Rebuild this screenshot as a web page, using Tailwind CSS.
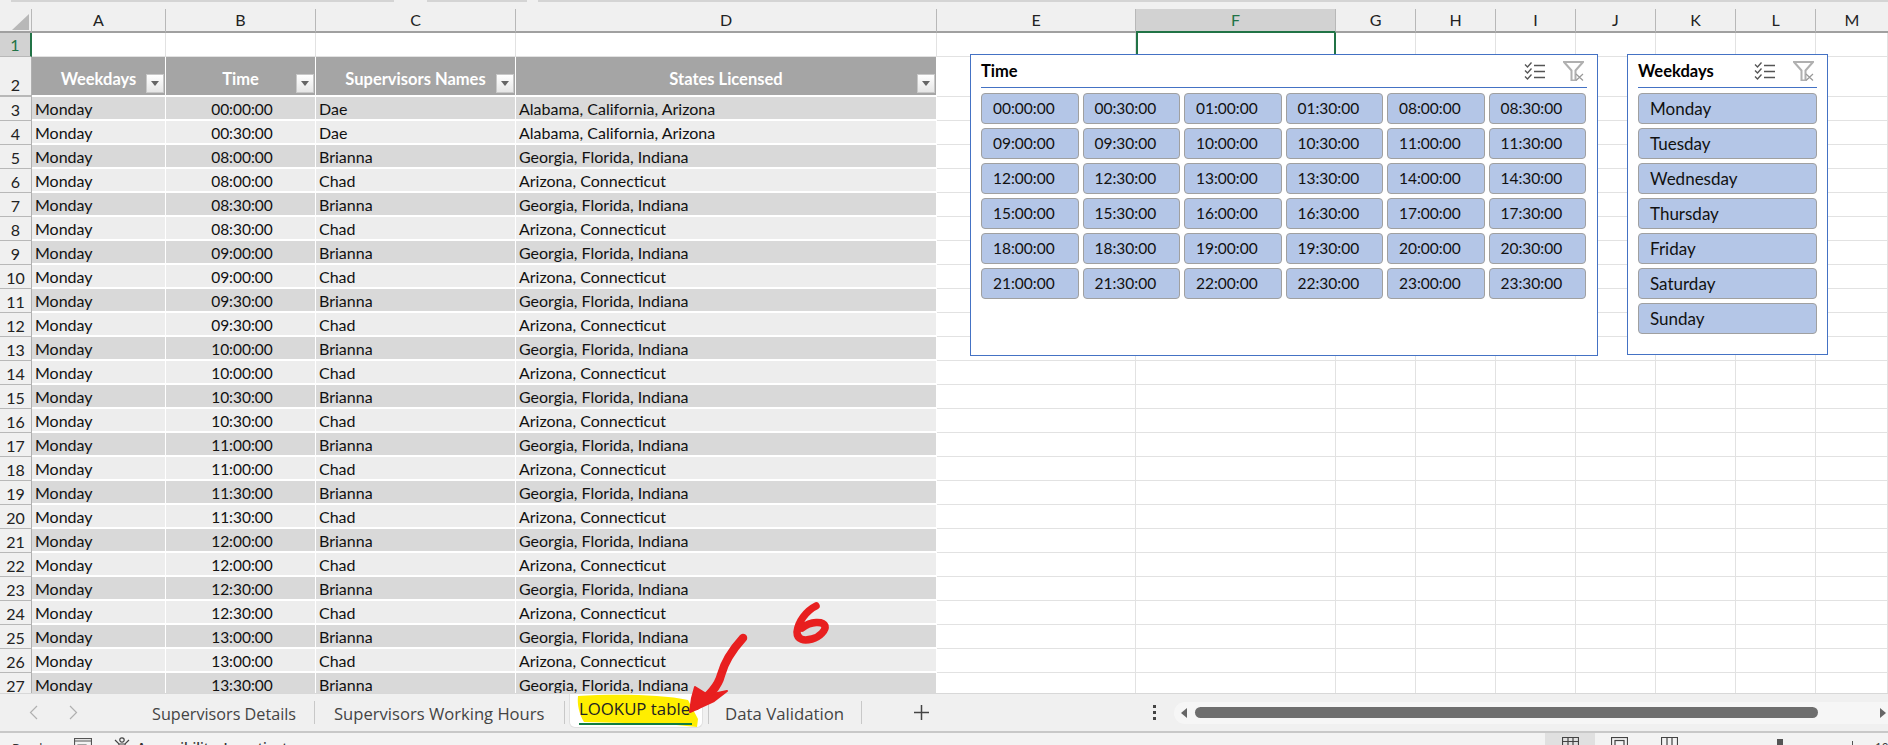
<!DOCTYPE html>
<html lang="en">
<head>
    <meta charset="UTF-8">
    <title>LOOKUP table</title>
    <script src="https://cdn.jsdelivr.net/npm/@tailwindcss/browser@4"></script>
</head>
<body class="bg-white font-['Lato','Liberation_Sans',sans-serif] text-[#111] overflow-hidden">
<div class="relative w-[1888px] h-[745px] flex flex-col overflow-hidden">

    <!-- ribbon edge -->
    <div class="h-[9px] shrink-0 bg-[#f0f0f0]">
        <div class="flex h-[2px]">
            <div class="w-[11px]"></div>
            <div class="w-[383px] bg-[#d4d4d4]"></div>
            <div class="w-[33px]"></div>
            <div class="w-[100px] bg-[#d4d4d4]"></div>
            <div class="w-[11px]"></div>
            <div class="flex-1 bg-[#d4d4d4]"></div>
        </div>
    </div>

    <!-- sheet -->
    <div class="relative flex-1 overflow-hidden">
        <table class="table-fixed border-separate border-spacing-0 w-[1888px] text-[16px] leading-[20px]">
            <colgroup>
                <col class="w-[32px]"><col class="w-[134px]"><col class="w-[150px]"><col class="w-[200px]"><col class="w-[421px]"><col class="w-[199px]"><col class="w-[200px]"><col class="w-[80px]"><col class="w-[80px]"><col class="w-[80px]"><col class="w-[80px]"><col class="w-[80px]"><col class="w-[80px]"><col class="w-[72px]">
            </colgroup>
            <thead class="[&_tr:first-child_th]:font-normal [&_tr:first-child_th]:bg-[#f0f0f0] [&_tr:first-child_th]:border-r [&_tr:first-child_th]:border-b-2 [&_tr:first-child_th]:border-r-[#b8b8b8] [&_tr:first-child_th]:border-b-[#a0a0a0] text-[#222]">
                <tr class="h-[24px]">
                    <th class="relative"><svg class="absolute left-[12px] top-[5px]" width="17" height="16"><polygon points="17,0 17,16 0,16" fill="#b8b8b8"/></svg></th>
                    <th>A</th><th>B</th><th>C</th><th>D</th><th>E</th>
                    <th class="!bg-[#d2d2d2] !text-[#217346] !border-b-[#217346]">F</th>
                    <th>G</th><th>H</th><th>I</th><th>J</th><th>K</th><th>L</th><th class="!border-r-0">M</th>
                </tr>
                <!-- row 1 -->
                <tr class="h-[24px] [&_td]:border-r [&_td]:border-b [&_td]:border-[#e2e2e2]">
                    <th class="font-normal text-[#217346] bg-[#d2d2d2] border-r-2 border-r-[#217346] border-b border-b-[#b8b8b8]">1</th>
                    <td></td><td></td><td></td><td></td><td></td>
                    <td class="!border-2 !border-t-0 !border-[#217346]"></td>
                    <td></td><td></td><td></td><td></td><td></td><td></td><td></td>
                </tr>
                <!-- row 2, table header -->
                <tr class="h-[40px] [&_td]:border-r [&_td]:border-b [&_td]:border-[#e2e2e2]">
                    <th class="font-normal align-bottom bg-[#f0f0f0] border-r border-b-2 border-r-[#b0b0b0] border-b-[#b8b8b8]">2</th>
                    <th class="relative bg-[#a5a5a5] text-white text-[16.5px] font-bold border-r border-b-2 border-white pt-[6px]">Weekdays
                        <span class="absolute right-[1px] bottom-[2px] w-[18px] h-[19px] flex items-center justify-center bg-gradient-to-b from-white to-[#e6e6e6] border border-[#c8c8c8]"><svg width="8" height="5"><polygon points="0,0 8,0 4,5" fill="#666"/></svg></span>
                    </th>
                    <th class="relative bg-[#a5a5a5] text-white text-[16.5px] font-bold border-r border-b-2 border-white pt-[6px]">Time
                        <span class="absolute right-[1px] bottom-[2px] w-[18px] h-[19px] flex items-center justify-center bg-gradient-to-b from-white to-[#e6e6e6] border border-[#c8c8c8]"><svg width="8" height="5"><polygon points="0,0 8,0 4,5" fill="#666"/></svg></span>
                    </th>
                    <th class="relative bg-[#a5a5a5] text-white text-[16.5px] font-bold border-r border-b-2 border-white pt-[6px]">Supervisors Names
                        <span class="absolute right-[1px] bottom-[2px] w-[18px] h-[19px] flex items-center justify-center bg-gradient-to-b from-white to-[#e6e6e6] border border-[#c8c8c8]"><svg width="8" height="5"><polygon points="0,0 8,0 4,5" fill="#666"/></svg></span>
                    </th>
                    <th class="relative bg-[#a5a5a5] text-white text-[16.5px] font-bold border-r border-b-2 border-white pt-[6px]">States Licensed
                        <span class="absolute right-[1px] bottom-[2px] w-[18px] h-[19px] flex items-center justify-center bg-gradient-to-b from-white to-[#e6e6e6] border border-[#c8c8c8]"><svg width="8" height="5"><polygon points="0,0 8,0 4,5" fill="#666"/></svg></span>
                    </th>
                    <td></td><td></td><td></td><td></td><td></td><td></td><td></td><td></td><td></td>
                </tr>
            </thead>
            <tbody class="[&>tr]:h-[24px] [&>tr:nth-child(odd)]:bg-[#d9d9d9] [&>tr:nth-child(even)]:bg-[#ededed] [&_th]:font-normal [&_th]:text-[#222] [&_th]:bg-[#f0f0f0] [&_th]:align-bottom [&_th]:border-r [&_th]:border-b [&_th]:border-r-[#b0b0b0] [&_th]:border-b-[#b8b8b8] [&_td]:align-bottom [&_td]:pl-[3px] [&_td]:border-r [&_td]:border-b-2 [&_td]:border-white [&_td:nth-child(3)]:text-center [&_td:nth-child(3)]:text-[15.5px] [&_td:nth-child(n+6)]:bg-white [&_td:nth-child(n+6)]:border-b [&_td:nth-child(n+6)]:border-[#e2e2e2]">
                <tr><th>3</th><td>Monday</td><td>00:00:00</td><td>Dae</td><td>Alabama, California, Arizona</td><td></td><td></td><td></td><td></td><td></td><td></td><td></td><td></td><td></td></tr>
                <tr><th>4</th><td>Monday</td><td>00:30:00</td><td>Dae</td><td>Alabama, California, Arizona</td><td></td><td></td><td></td><td></td><td></td><td></td><td></td><td></td><td></td></tr>
                <tr><th>5</th><td>Monday</td><td>08:00:00</td><td>Brianna</td><td>Georgia, Florida, Indiana</td><td></td><td></td><td></td><td></td><td></td><td></td><td></td><td></td><td></td></tr>
                <tr><th>6</th><td>Monday</td><td>08:00:00</td><td>Chad</td><td>Arizona, Connecticut</td><td></td><td></td><td></td><td></td><td></td><td></td><td></td><td></td><td></td></tr>
                <tr><th>7</th><td>Monday</td><td>08:30:00</td><td>Brianna</td><td>Georgia, Florida, Indiana</td><td></td><td></td><td></td><td></td><td></td><td></td><td></td><td></td><td></td></tr>
                <tr><th>8</th><td>Monday</td><td>08:30:00</td><td>Chad</td><td>Arizona, Connecticut</td><td></td><td></td><td></td><td></td><td></td><td></td><td></td><td></td><td></td></tr>
                <tr><th>9</th><td>Monday</td><td>09:00:00</td><td>Brianna</td><td>Georgia, Florida, Indiana</td><td></td><td></td><td></td><td></td><td></td><td></td><td></td><td></td><td></td></tr>
                <tr><th>10</th><td>Monday</td><td>09:00:00</td><td>Chad</td><td>Arizona, Connecticut</td><td></td><td></td><td></td><td></td><td></td><td></td><td></td><td></td><td></td></tr>
                <tr><th>11</th><td>Monday</td><td>09:30:00</td><td>Brianna</td><td>Georgia, Florida, Indiana</td><td></td><td></td><td></td><td></td><td></td><td></td><td></td><td></td><td></td></tr>
                <tr><th>12</th><td>Monday</td><td>09:30:00</td><td>Chad</td><td>Arizona, Connecticut</td><td></td><td></td><td></td><td></td><td></td><td></td><td></td><td></td><td></td></tr>
                <tr><th>13</th><td>Monday</td><td>10:00:00</td><td>Brianna</td><td>Georgia, Florida, Indiana</td><td></td><td></td><td></td><td></td><td></td><td></td><td></td><td></td><td></td></tr>
                <tr><th>14</th><td>Monday</td><td>10:00:00</td><td>Chad</td><td>Arizona, Connecticut</td><td></td><td></td><td></td><td></td><td></td><td></td><td></td><td></td><td></td></tr>
                <tr><th>15</th><td>Monday</td><td>10:30:00</td><td>Brianna</td><td>Georgia, Florida, Indiana</td><td></td><td></td><td></td><td></td><td></td><td></td><td></td><td></td><td></td></tr>
                <tr><th>16</th><td>Monday</td><td>10:30:00</td><td>Chad</td><td>Arizona, Connecticut</td><td></td><td></td><td></td><td></td><td></td><td></td><td></td><td></td><td></td></tr>
                <tr><th>17</th><td>Monday</td><td>11:00:00</td><td>Brianna</td><td>Georgia, Florida, Indiana</td><td></td><td></td><td></td><td></td><td></td><td></td><td></td><td></td><td></td></tr>
                <tr><th>18</th><td>Monday</td><td>11:00:00</td><td>Chad</td><td>Arizona, Connecticut</td><td></td><td></td><td></td><td></td><td></td><td></td><td></td><td></td><td></td></tr>
                <tr><th>19</th><td>Monday</td><td>11:30:00</td><td>Brianna</td><td>Georgia, Florida, Indiana</td><td></td><td></td><td></td><td></td><td></td><td></td><td></td><td></td><td></td></tr>
                <tr><th>20</th><td>Monday</td><td>11:30:00</td><td>Chad</td><td>Arizona, Connecticut</td><td></td><td></td><td></td><td></td><td></td><td></td><td></td><td></td><td></td></tr>
                <tr><th>21</th><td>Monday</td><td>12:00:00</td><td>Brianna</td><td>Georgia, Florida, Indiana</td><td></td><td></td><td></td><td></td><td></td><td></td><td></td><td></td><td></td></tr>
                <tr><th>22</th><td>Monday</td><td>12:00:00</td><td>Chad</td><td>Arizona, Connecticut</td><td></td><td></td><td></td><td></td><td></td><td></td><td></td><td></td><td></td></tr>
                <tr><th>23</th><td>Monday</td><td>12:30:00</td><td>Brianna</td><td>Georgia, Florida, Indiana</td><td></td><td></td><td></td><td></td><td></td><td></td><td></td><td></td><td></td></tr>
                <tr><th>24</th><td>Monday</td><td>12:30:00</td><td>Chad</td><td>Arizona, Connecticut</td><td></td><td></td><td></td><td></td><td></td><td></td><td></td><td></td><td></td></tr>
                <tr><th>25</th><td>Monday</td><td>13:00:00</td><td>Brianna</td><td>Georgia, Florida, Indiana</td><td></td><td></td><td></td><td></td><td></td><td></td><td></td><td></td><td></td></tr>
                <tr><th>26</th><td>Monday</td><td>13:00:00</td><td>Chad</td><td>Arizona, Connecticut</td><td></td><td></td><td></td><td></td><td></td><td></td><td></td><td></td><td></td></tr>
                <tr><th>27</th><td>Monday</td><td>13:30:00</td><td>Brianna</td><td>Georgia, Florida, Indiana</td><td></td><td></td><td></td><td></td><td></td><td></td><td></td><td></td><td></td></tr>
            </tbody>
        </table>

        <!-- Time slicer -->
        <div class="absolute left-[970px] top-[45px] w-[628px] h-[302px] bg-white border border-[#4472c4] px-[10px] text-[15.5px]">
            <div class="h-[33px] flex items-center border-b border-[#4472c4]">
                <span class="font-bold text-[16.5px] text-black">Time</span>
                <span class="ml-auto flex items-center gap-[18px] pr-[3px]">
                    <svg width="21" height="18" fill="none" stroke="#555" stroke-width="1.3"><path d="M1 2.5l2.5 2.5 4-4.5M1 8.5l2.500 2.500 4-4.500M1 14.500l2.500 2.500 4-4.500"/><path d="M10 3.500h11M10 9.500h11M10 15.500h11" stroke-width="1.5"/></svg>
                    <svg width="21" height="20" fill="none" stroke="#b0b0b0" stroke-width="2"><path d="M1 1h19l-7.500 8.500v10h-4v-10z"/><path d="M13 13l7 6.500M20 13l-7 6.500" stroke-width="1.200" stroke="#999"/></svg>
                </span>
            </div>
            <div class="grid grid-cols-6 gap-x-[4px] gap-y-[4px] pt-[5px] pr-[1px]">
                <div class="h-[31px] flex items-center pl-[11px] bg-[#b4c6e7] border border-[#a0a0a0] rounded-[4px]">00:00:00</div>
                <div class="h-[31px] flex items-center pl-[11px] bg-[#b4c6e7] border border-[#a0a0a0] rounded-[4px]">00:30:00</div>
                <div class="h-[31px] flex items-center pl-[11px] bg-[#b4c6e7] border border-[#a0a0a0] rounded-[4px]">01:00:00</div>
                <div class="h-[31px] flex items-center pl-[11px] bg-[#b4c6e7] border border-[#a0a0a0] rounded-[4px]">01:30:00</div>
                <div class="h-[31px] flex items-center pl-[11px] bg-[#b4c6e7] border border-[#a0a0a0] rounded-[4px]">08:00:00</div>
                <div class="h-[31px] flex items-center pl-[11px] bg-[#b4c6e7] border border-[#a0a0a0] rounded-[4px]">08:30:00</div>
                <div class="h-[31px] flex items-center pl-[11px] bg-[#b4c6e7] border border-[#a0a0a0] rounded-[4px]">09:00:00</div>
                <div class="h-[31px] flex items-center pl-[11px] bg-[#b4c6e7] border border-[#a0a0a0] rounded-[4px]">09:30:00</div>
                <div class="h-[31px] flex items-center pl-[11px] bg-[#b4c6e7] border border-[#a0a0a0] rounded-[4px]">10:00:00</div>
                <div class="h-[31px] flex items-center pl-[11px] bg-[#b4c6e7] border border-[#a0a0a0] rounded-[4px]">10:30:00</div>
                <div class="h-[31px] flex items-center pl-[11px] bg-[#b4c6e7] border border-[#a0a0a0] rounded-[4px]">11:00:00</div>
                <div class="h-[31px] flex items-center pl-[11px] bg-[#b4c6e7] border border-[#a0a0a0] rounded-[4px]">11:30:00</div>
                <div class="h-[31px] flex items-center pl-[11px] bg-[#b4c6e7] border border-[#a0a0a0] rounded-[4px]">12:00:00</div>
                <div class="h-[31px] flex items-center pl-[11px] bg-[#b4c6e7] border border-[#a0a0a0] rounded-[4px]">12:30:00</div>
                <div class="h-[31px] flex items-center pl-[11px] bg-[#b4c6e7] border border-[#a0a0a0] rounded-[4px]">13:00:00</div>
                <div class="h-[31px] flex items-center pl-[11px] bg-[#b4c6e7] border border-[#a0a0a0] rounded-[4px]">13:30:00</div>
                <div class="h-[31px] flex items-center pl-[11px] bg-[#b4c6e7] border border-[#a0a0a0] rounded-[4px]">14:00:00</div>
                <div class="h-[31px] flex items-center pl-[11px] bg-[#b4c6e7] border border-[#a0a0a0] rounded-[4px]">14:30:00</div>
                <div class="h-[31px] flex items-center pl-[11px] bg-[#b4c6e7] border border-[#a0a0a0] rounded-[4px]">15:00:00</div>
                <div class="h-[31px] flex items-center pl-[11px] bg-[#b4c6e7] border border-[#a0a0a0] rounded-[4px]">15:30:00</div>
                <div class="h-[31px] flex items-center pl-[11px] bg-[#b4c6e7] border border-[#a0a0a0] rounded-[4px]">16:00:00</div>
                <div class="h-[31px] flex items-center pl-[11px] bg-[#b4c6e7] border border-[#a0a0a0] rounded-[4px]">16:30:00</div>
                <div class="h-[31px] flex items-center pl-[11px] bg-[#b4c6e7] border border-[#a0a0a0] rounded-[4px]">17:00:00</div>
                <div class="h-[31px] flex items-center pl-[11px] bg-[#b4c6e7] border border-[#a0a0a0] rounded-[4px]">17:30:00</div>
                <div class="h-[31px] flex items-center pl-[11px] bg-[#b4c6e7] border border-[#a0a0a0] rounded-[4px]">18:00:00</div>
                <div class="h-[31px] flex items-center pl-[11px] bg-[#b4c6e7] border border-[#a0a0a0] rounded-[4px]">18:30:00</div>
                <div class="h-[31px] flex items-center pl-[11px] bg-[#b4c6e7] border border-[#a0a0a0] rounded-[4px]">19:00:00</div>
                <div class="h-[31px] flex items-center pl-[11px] bg-[#b4c6e7] border border-[#a0a0a0] rounded-[4px]">19:30:00</div>
                <div class="h-[31px] flex items-center pl-[11px] bg-[#b4c6e7] border border-[#a0a0a0] rounded-[4px]">20:00:00</div>
                <div class="h-[31px] flex items-center pl-[11px] bg-[#b4c6e7] border border-[#a0a0a0] rounded-[4px]">20:30:00</div>
                <div class="h-[31px] flex items-center pl-[11px] bg-[#b4c6e7] border border-[#a0a0a0] rounded-[4px]">21:00:00</div>
                <div class="h-[31px] flex items-center pl-[11px] bg-[#b4c6e7] border border-[#a0a0a0] rounded-[4px]">21:30:00</div>
                <div class="h-[31px] flex items-center pl-[11px] bg-[#b4c6e7] border border-[#a0a0a0] rounded-[4px]">22:00:00</div>
                <div class="h-[31px] flex items-center pl-[11px] bg-[#b4c6e7] border border-[#a0a0a0] rounded-[4px]">22:30:00</div>
                <div class="h-[31px] flex items-center pl-[11px] bg-[#b4c6e7] border border-[#a0a0a0] rounded-[4px]">23:00:00</div>
                <div class="h-[31px] flex items-center pl-[11px] bg-[#b4c6e7] border border-[#a0a0a0] rounded-[4px]">23:30:00</div>
            </div>
        </div>

        <!-- Weekdays slicer -->
        <div class="absolute left-[1627px] top-[45px] w-[201px] h-[301px] bg-white border border-[#4472c4] px-[10px] text-[17px]">
            <div class="h-[33px] flex items-center border-b border-[#4472c4]">
                <span class="font-bold text-[16.5px] text-black">Weekdays</span>
                <span class="ml-auto flex items-center gap-[18px] pr-[3px]">
                    <svg width="21" height="18" fill="none" stroke="#555" stroke-width="1.3"><path d="M1 2.500l2.500 2.500 4-4.500M1 8.500l2.500 2.500 4-4.500M1 14.500l2.500 2.500 4-4.500"/><path d="M10 3.500h11M10 9.500h11M10 15.500h11" stroke-width="1.5"/></svg>
                    <svg width="21" height="20" fill="none" stroke="#b0b0b0" stroke-width="2"><path d="M1 1h19l-7.500 8.500v10h-4v-10z"/><path d="M13 13l7 6.500M20 13l-7 6.500" stroke-width="1.200" stroke="#999"/></svg>
                </span>
            </div>
            <div class="flex flex-col gap-[4px] pt-[5px]">
                <div class="h-[31px] flex items-center pl-[11px] bg-[#b4c6e7] border border-[#a0a0a0] rounded-[4px]">Monday</div>
                <div class="h-[31px] flex items-center pl-[11px] bg-[#b4c6e7] border border-[#a0a0a0] rounded-[4px]">Tuesday</div>
                <div class="h-[31px] flex items-center pl-[11px] bg-[#b4c6e7] border border-[#a0a0a0] rounded-[4px]">Wednesday</div>
                <div class="h-[31px] flex items-center pl-[11px] bg-[#b4c6e7] border border-[#a0a0a0] rounded-[4px]">Thursday</div>
                <div class="h-[31px] flex items-center pl-[11px] bg-[#b4c6e7] border border-[#a0a0a0] rounded-[4px]">Friday</div>
                <div class="h-[31px] flex items-center pl-[11px] bg-[#b4c6e7] border border-[#a0a0a0] rounded-[4px]">Saturday</div>
                <div class="h-[31px] flex items-center pl-[11px] bg-[#b4c6e7] border border-[#a0a0a0] rounded-[4px]">Sunday</div>
            </div>
        </div>
    </div>

    <!-- sheet tabs -->
    <div class="h-[40px] shrink-0 flex items-center bg-[#f0f0f0] border-t border-b-2 border-t-[#d8d8d8] border-b-[#c8c8c8] font-['Open_Sans',sans-serif] text-[16.5px] text-[#444]">
        <div class="w-[152px] flex items-center gap-[31px] pl-[29px] shrink-0">
            <svg width="9" height="15" fill="none" stroke="#b0b0b0" stroke-width="1.2"><path d="M8 1L1.500 7.500 8 14"/></svg>
            <svg width="9" height="15" fill="none" stroke="#b0b0b0" stroke-width="1.2"><path d="M1 1l6.500 6.500L1 14"/></svg>
        </div>
        <span class="w-[145px] whitespace-nowrap text-[16.2px] pt-[3px]">Supervisors Details</span>
        <span class="ml-[17px] w-px h-[23px] bg-[#c8c8c8]"></span>
        <span class="ml-[19px] w-[210px] whitespace-nowrap text-[16.6px] pt-[3px]">Supervisors Working Hours</span>
        <span class="ml-[20px] w-px h-[23px] bg-[#c8c8c8]"></span>
        <div class="relative ml-[4px] w-[134px] h-[34px] self-start bg-white rounded-b-[6px] border border-t-0 border-[#e0e0e0]">
            <svg class="absolute left-[6px] top-0" width="124" height="33"><path d="M2 2C35 0 85 0 112 6L122 25L121 33L90 30L8 28C3 20 1 10 2 2Z" fill="#ffee00"/></svg>
            <span class="absolute left-[9px] top-[2px] whitespace-nowrap text-[#222] text-[16.8px]">LOOKUP table</span>
            <span class="absolute left-[9px] w-[113px] top-[29px] h-[2px] bg-[#107c41]"></span>
        </div>
        <span class="ml-[5px] w-px h-[23px] bg-[#c8c8c8]"></span>
        <span class="ml-[16px] w-[118px] whitespace-nowrap text-[16.8px] pt-[3px]">Data Validation</span>
        <span class="ml-[18px] w-px h-[23px] bg-[#c8c8c8]"></span>
        <svg class="ml-[52px] shrink-0" width="15" height="15" stroke="#444" stroke-width="1.5"><path d="M7.500 0v15M0 7.500h15"/></svg>
        <svg class="ml-[224px] shrink-0" width="3" height="15" fill="#444"><rect y="0" width="3" height="3"/><rect y="6" width="3" height="3"/><rect y="12" width="3" height="3"/></svg>
        <div class="ml-[18px] flex-1 h-[22px] flex items-center bg-[#f6f6f6] rounded-l-full relative">
            <svg class="ml-[7px] shrink-0" width="6" height="10" fill="#666"><polygon points="6,0 6,10 0,5"/></svg>
            <div class="ml-[8px] w-[623px] h-[11px] rounded-full bg-[#6e6e6e]"></div>
            <svg class="absolute right-[2px] shrink-0" width="6" height="10" fill="#666"><polygon points="0,0 6,5 0,10"/></svg>
        </div>
    </div>

    <!-- status bar, cut off by the screenshot -->
    <div class="h-[12px] shrink-0 overflow-hidden bg-[#f3f3f3] flex items-start text-[13.5px] leading-[18px] text-[#333] font-['Open_Sans',sans-serif]">
        <span class="ml-[12px] mt-[6px] w-[36px] text-[13px]">Ready</span>
        <svg class="ml-[26px] mt-[5px] shrink-0" width="18" height="14" fill="none" stroke="#555" stroke-width="1.200"><rect x="0.500" y="0.500" width="17" height="13"/><path d="M0 3h18M4 7h8v5H4z"/></svg>
        <svg class="ml-[22px] mt-[4px] shrink-0" width="16" height="14" fill="none" stroke="#444" stroke-width="1.200"><circle cx="8" cy="3" r="2.200"/><path d="M1 3l4 4h6l4-4M5 7l-1 6M11 7l1 6"/></svg>
        <span class="ml-[7px] mt-[6px] font-semibold whitespace-nowrap w-[151px]">Accessibility: Investigate</span>
        <div class="ml-[1257px] w-[50px] h-full flex justify-center bg-[#e0e0e0] shrink-0">
            <svg class="mt-[4px]" width="17" height="14" fill="none" stroke="#444" stroke-width="1.200"><path d="M.5.5h16v13H.5zM.5 4.500h16M.5 9h16M6 .5v13M11 .5v13"/></svg>
        </div>
        <svg class="ml-[16px] mt-[4px] shrink-0" width="17" height="14" fill="none" stroke="#444" stroke-width="1.200"><rect x=".5" y=".5" width="16" height="13"/><rect x="4" y="3.500" width="9" height="9"/></svg>
        <svg class="ml-[33px] mt-[4px] shrink-0" width="17" height="14" fill="none" stroke="#444" stroke-width="1.200"><path d="M.5.5h16v13H.5zM6 .5v13M11 .5v13"/></svg>
        <span class="ml-[99px] mt-[6px] w-[6px] h-[8px] bg-[#555] shrink-0"></span>
        <span class="ml-[69px] mt-[8px] w-px h-[6px] bg-[#555] shrink-0"></span>
        <span class="ml-[22px] mt-[6px] text-[12px] whitespace-nowrap">100%</span>
    </div>

    <!-- hand drawn annotation -->
    <svg class="absolute inset-0 pointer-events-none" width="1888" height="745" fill="none">
        <path d="M743 638C733 649 725 660 721 675C718 687 709 696 696 706" stroke="#e81f1f" stroke-width="8.500" stroke-linecap="round"/>
        <path d="M695 687L708 695L727 691L714 701L690 712L692 698Z" fill="#e81f1f" stroke="#e81f1f" stroke-width="2" stroke-linejoin="round"/>
        <path d="M816 606C806 611 798 622 797 632C797 640 804 641 812 639C820 637 826 630 825 626C823 621 811 621 802 628" stroke="#e81f1f" stroke-width="7.500" stroke-linecap="round" stroke-linejoin="round"/>
    </svg>
</div>
</body>
</html>
